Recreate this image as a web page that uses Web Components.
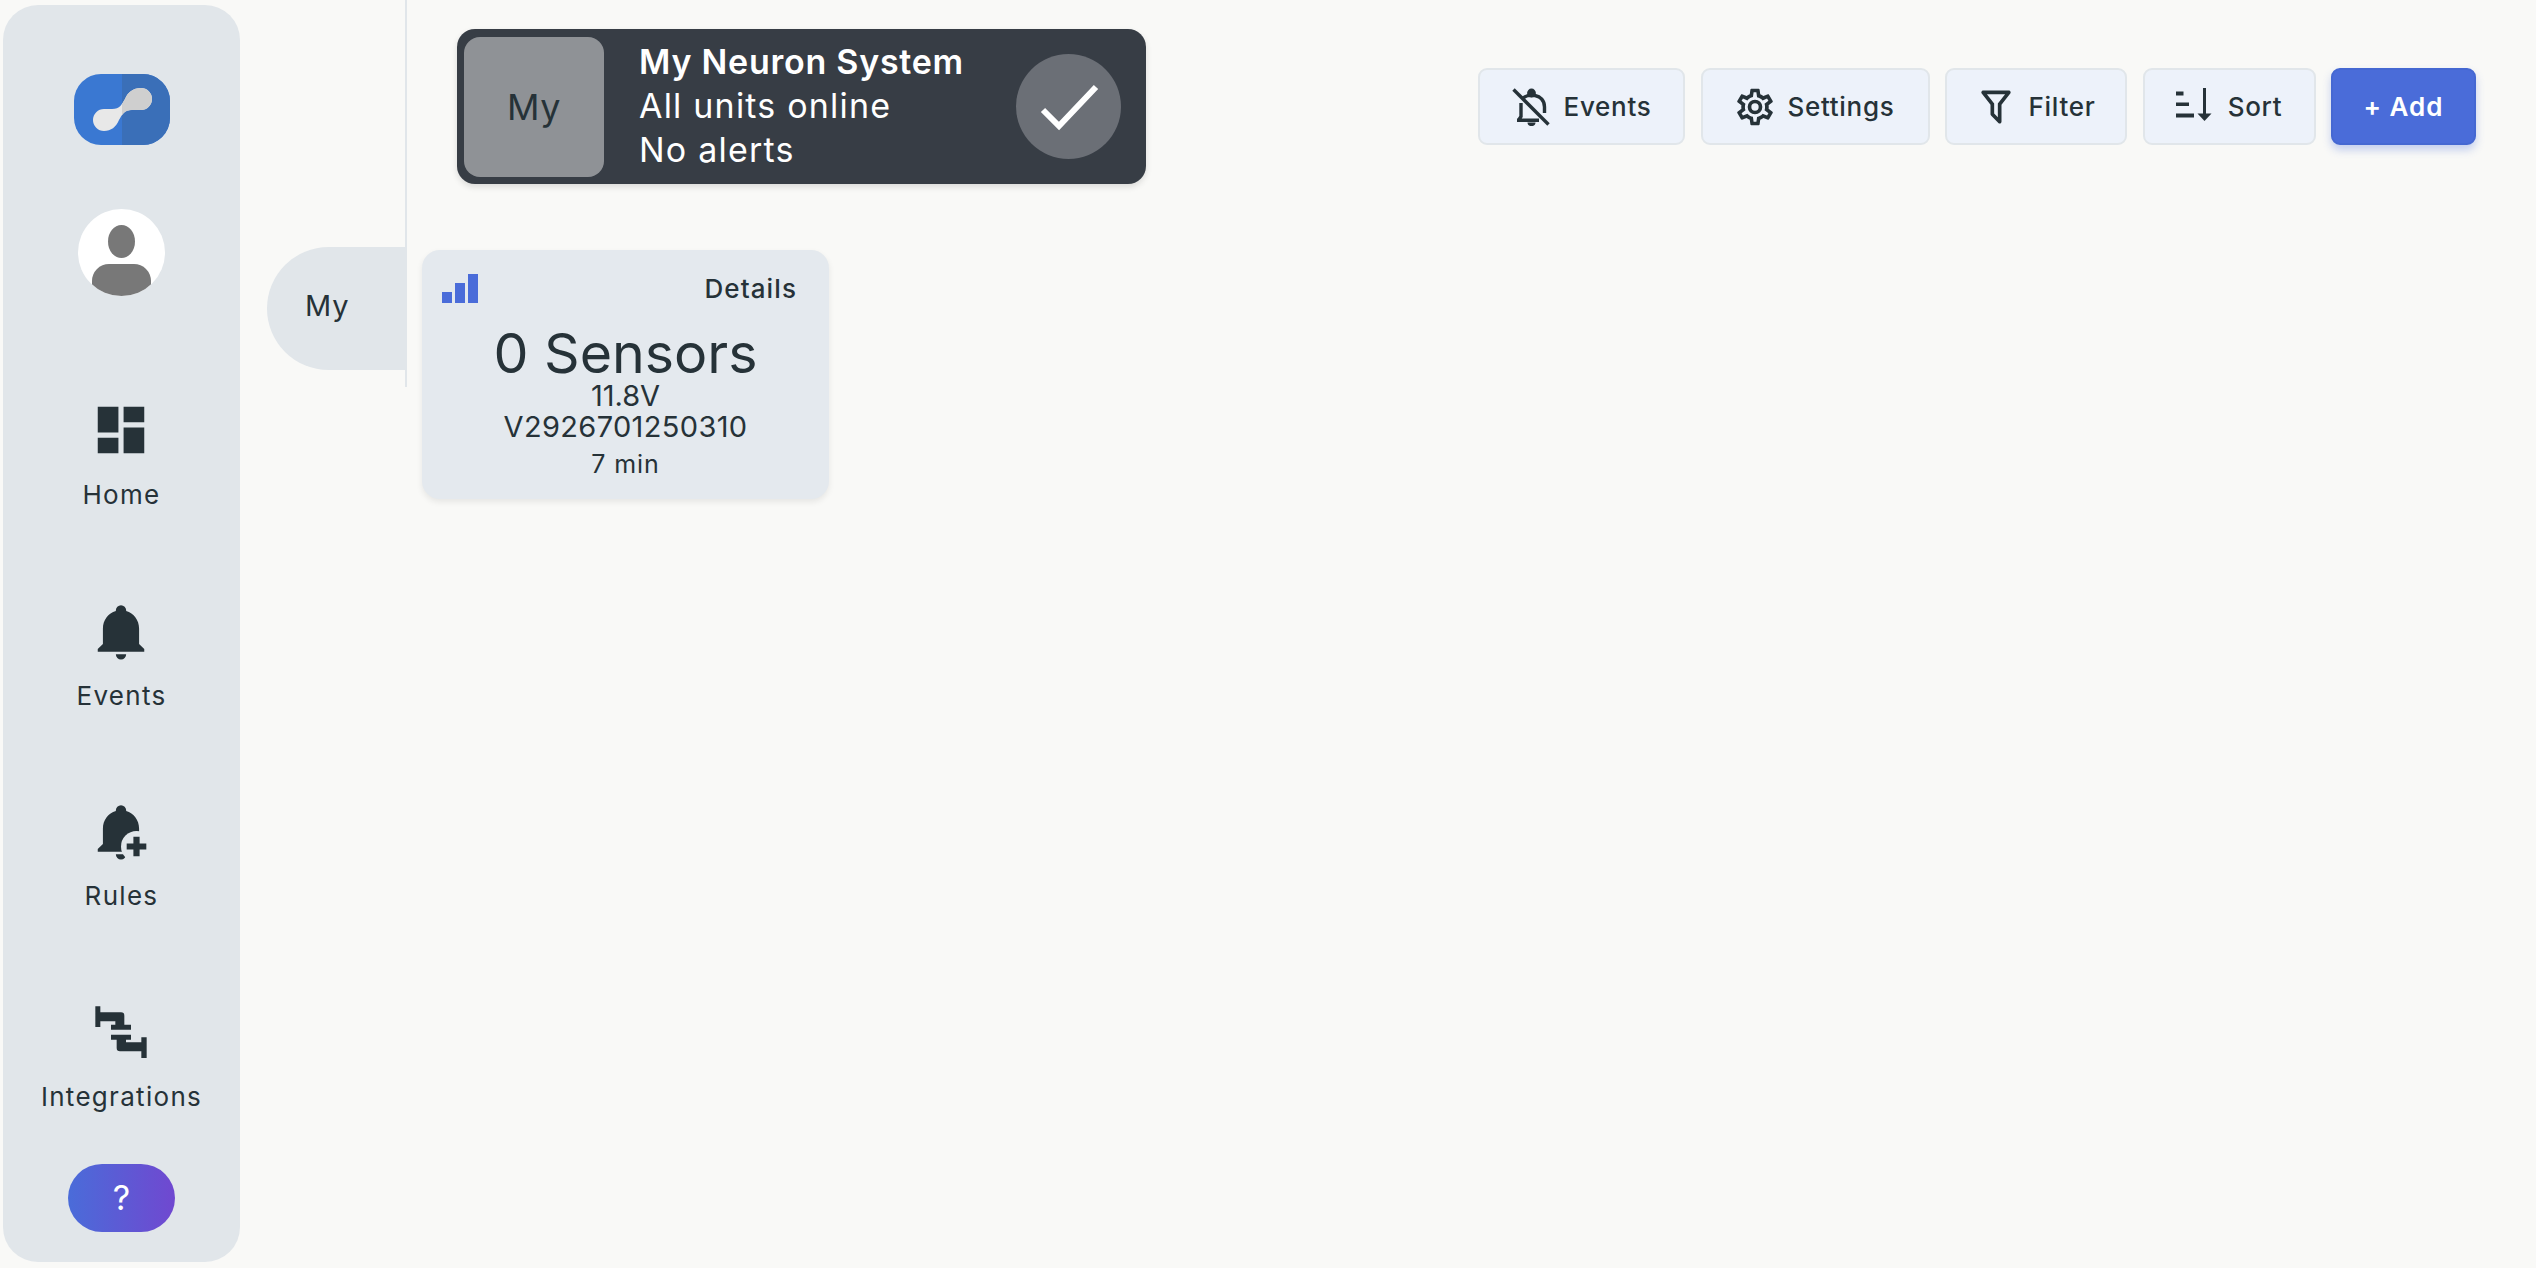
<!DOCTYPE html>
<html lang="en">
<head>
<meta charset="utf-8">
<title>Neuron</title>
<style>
  html, body { margin: 0; height: 100%; background: #f9f9f7; }
  body { font-family: Inter, "Liberation Sans", sans-serif; color: #263238; overflow: hidden; }
</style>
</head>
<body>
<app-shell>
  <side-bar>
    <nav-item>
      <svg slot="icon" viewBox="0 0 24 24"><path d="M3 13h8V3H3v10zm0 8h8v-6H3v6zm10 0h8V11h-8v10zm0-18v6h8V3h-8z"/></svg>
      Home
    </nav-item>
    <nav-item>
      <svg slot="icon" viewBox="0 0 24 24"><path d="M21,19V20H3V19L5,17V11C5,7.9 7.03,5.17 10,4.29C10,4.19 10,4.1 10,4A2,2 0 0,1 12,2A2,2 0 0,1 14,4C14,4.1 14,4.19 14,4.29C16.97,5.17 19,7.9 19,11V17L21,19M14,21A2,2 0 0,1 12,23A2,2 0 0,1 10,21H14Z"/></svg>
      Events
    </nav-item>
    <nav-item>
      <svg slot="icon" viewBox="0 0 24 24">
        <path d="M21,19V20H3V19L5,17V11C5,7.9 7.03,5.17 10,4.29C10,4.19 10,4.1 10,4A2,2 0 0,1 12,2A2,2 0 0,1 14,4C14,4.1 14,4.19 14,4.29C16.97,5.17 19,7.9 19,11V17L21,19M14,21A2,2 0 0,1 12,23A2,2 0 0,1 10,21H14Z"/>
        <circle cx="18" cy="18" r="6" fill="#e1e6ea"/>
        <path d="M16.8 14.2h2.4v2.6h2.6v2.4h-2.6v2.6h-2.4v-2.6h-2.6v-2.4h2.6z"/>
      </svg>
      Rules
    </nav-item>
    <nav-item>
      <svg slot="icon" viewBox="32 34 186 186">
        <path d="M48 50H63V68H125Q135 68 135 78V105H155V120H95V105H108V95H63V112H48Z"/>
        <path d="M95 135H155V150H140V158H186V143H202V205H186V185H122Q112 185 112 175V150H95Z"/>
      </svg>
      Integrations
    </nav-item>
  </side-bar>
  <group-tabs>
    <group-tab>My</group-tab>
  </group-tabs>
  <main-panel>
    <top-bar>
      <status-card tile="My" title-text="My Neuron System">
        <span>All units online</span>
        <span>No alerts</span>
      </status-card>
      <action-button slot="actions" style="--w:207px">
        <svg slot="icon" viewBox="0 0 38 38">
          <path d="M1.5 1.5L36.5 36.5" fill="none" stroke="currentColor" stroke-width="3.4"/>
          <path d="M5 32.2h22M7 31.5l2-3V15M32.5 25V19C32.5 12.5 28.5 8.5 23 7.5H16C14 8.2 12.5 9 11 10" fill="none" stroke="currentColor" stroke-width="3.4"/>
          <circle cx="19.5" cy="5" r="4.4"/>
          <path d="M15.5 34.5h8A4 3.6 0 0 1 15.5 34.5Z"/>
        </svg>
        Events
      </action-button>
      <action-button slot="actions" style="--w:229px">
        <svg slot="icon" class="mdi" viewBox="0 0 24 24"><path d="M12,8A4,4 0 0,1 16,12A4,4 0 0,1 12,16A4,4 0 0,1 8,12A4,4 0 0,1 12,8M12,10A2,2 0 0,0 10,12A2,2 0 0,0 12,14A2,2 0 0,0 14,12A2,2 0 0,0 12,10M10,22C9.75,22 9.54,21.82 9.5,21.58L9.13,18.93C8.5,18.68 7.96,18.34 7.44,17.94L4.95,18.95C4.73,19.03 4.46,18.95 4.34,18.73L2.34,15.27C2.21,15.05 2.27,14.78 2.46,14.63L4.57,12.97L4.5,12L4.57,11L2.46,9.37C2.27,9.22 2.21,8.95 2.34,8.73L4.34,5.27C4.46,5.05 4.73,4.96 4.95,5.05L7.44,6.05C7.96,5.66 8.5,5.32 9.13,5.07L9.5,2.42C9.54,2.18 9.75,2 10,2H14C14.25,2 14.46,2.18 14.5,2.42L14.87,5.07C15.5,5.32 16.04,5.66 16.56,6.05L19.05,5.05C19.27,4.96 19.54,5.05 19.66,5.27L21.66,8.73C21.79,8.95 21.73,9.22 21.54,9.37L19.43,11L19.5,12L19.43,13L21.54,14.63C21.73,14.78 21.79,15.05 21.66,15.27L19.66,18.73C19.54,18.95 19.27,19.04 19.05,18.95L16.56,17.95C16.04,18.34 15.5,18.68 14.87,18.93L14.5,21.58C14.46,21.82 14.25,22 14,22H10M11.25,4L10.88,6.61C9.68,6.86 8.62,7.5 7.85,8.39L5.44,7.35L4.69,8.65L6.8,10.2C6.4,11.37 6.4,12.64 6.8,13.8L4.68,15.36L5.43,16.66L7.86,15.62C8.63,16.5 9.68,17.14 10.87,17.38L11.24,20H12.76L13.13,17.39C14.32,17.14 15.37,16.5 16.14,15.62L18.57,16.66L19.32,15.36L17.2,13.81C17.6,12.64 17.6,11.37 17.2,10.2L19.31,8.65L18.56,7.35L16.15,8.39C15.38,7.5 14.32,6.86 13.12,6.62L12.75,4H11.25Z"/></svg>
        Settings
      </action-button>
      <action-button slot="actions" style="--w:182px">
        <svg slot="icon" class="mdi" viewBox="0 0 24 24"><path d="M15,19.88C15.04,20.18 14.94,20.5 14.71,20.71C14.32,21.1 13.69,21.1 13.3,20.71L9.29,16.7C9.06,16.47 8.96,16.16 9,15.87V10.75L4.21,4.62C3.87,4.19 3.95,3.56 4.38,3.22C4.57,3.08 4.78,3 5,3V3H19V3C19.22,3 19.43,3.08 19.62,3.22C20.05,3.56 20.13,4.19 19.79,4.62L15,10.75V19.88M7.04,5L11,10.06V15.58L13,17.58V10.05L16.96,5H7.04Z"/></svg>
        Filter
      </action-button>
      <action-button slot="actions" style="--w:173px">
        <svg slot="icon" viewBox="0 0 38 38">
          <rect x="0" y="3.5" width="7.5" height="4"/>
          <rect x="0" y="14.5" width="13" height="3.5"/>
          <rect x="0" y="25.5" width="18" height="4"/>
          <rect x="27" y="0" width="3" height="28"/>
          <path d="M21.5 25.5h14L28.5 33Z"/>
        </svg>
        Sort
      </action-button>
      <action-button slot="actions" primary style="--w:145px">+ Add</action-button>
    </top-bar>
    <unit-card voltage="11.8V" serial="V2926701250310" age="7 min">0 Sensors</unit-card>
  </main-panel>
</app-shell>

<script>
function define(tag, html) {
  class C extends HTMLElement {
    constructor() {
      super();
      this.attachShadow({ mode: 'open' });
      this.shadowRoot.innerHTML = typeof html === 'function' ? html(this) : html;
    }
  }
  customElements.define(tag, C);
}

define('app-shell', `
  <style>
    :host { display: flex; align-items: flex-start; height: 1268px; box-sizing: border-box; }
  </style>
  <slot></slot>
`);

define('side-bar', `
  <style>
    :host {
      display: flex; flex-direction: column; align-items: center;
      flex: none; box-sizing: border-box; width: 237px; height: 1257px;
      margin: 5px 0 0 3px; padding-top: 69px;
      background: #e1e6ea; border-radius: 35px;
    }
    .logo { display: block; width: 96px; height: 71px; flex: none; }
    .avatar { display: block; width: 87px; height: 87px; margin-top: 64px; flex: none; }
    .nav { display: flex; flex-direction: column; gap: 84.6px; margin-top: 103px; align-items: center; }
    .help {
      display: flex; align-items: center; justify-content: center;
      width: 107px; height: 68px; margin-top: 47px; flex: none;
      border-radius: 34px; color: #fff; font-size: 34px; font-weight: 400;
      background: linear-gradient(90deg, #4a6cd9, #7048d0);
    }
  </style>
  <svg class="logo" viewBox="0 0 96 71">
    <defs>
      <clipPath id="logo-r"><rect x="48" y="0" width="48" height="71"/></clipPath>
    </defs>
    <rect width="96" height="71" rx="27" fill="#3a78d2"/>
    <rect width="96" height="71" rx="27" fill="#3a6fb8" clip-path="url(#logo-r)"/>
    <path d="M30 35H38C46 35 48 30 51 25C54 18 59 14 67 14A11 11 0 0 1 67 36H58C50 36 48 41 45 46C42 53 37 57 30 57A11 11 0 0 1 30 35Z" fill="#e8e8e8"/>
    <path d="M30 35H38C46 35 48 30 51 25C54 18 59 14 67 14A11 11 0 0 1 67 36H58C50 36 48 41 45 46C42 53 37 57 30 57A11 11 0 0 1 30 35Z" fill="#cfcfcf" clip-path="url(#logo-r)"/>
  </svg>
  <svg class="avatar" viewBox="0 0 87 87">
    <defs><clipPath id="av"><circle cx="43.5" cy="43.5" r="43.5"/></clipPath></defs>
    <circle cx="43.5" cy="43.5" r="43.5" fill="#fff"/>
    <ellipse cx="43.5" cy="32.5" rx="13.5" ry="16.5" fill="#787878"/>
    <g clip-path="url(#av)"><rect x="14" y="55" width="59" height="50" rx="17" fill="#787878"/></g>
  </svg>
  <div class="nav"><slot></slot></div>
  <div class="help">?</div>
`);

define('nav-item', `
  <style>
    :host {
      display: flex; flex-direction: column; align-items: center; gap: 14px;
      height: 116px; font-size: 26px; line-height: 40px; letter-spacing: 1.3px;
      color: #263238; white-space: nowrap;
    }
    ::slotted(svg) { display: block; width: 62px; height: 62px; fill: #263238; }
  </style>
  <slot name="icon"></slot>
  <slot></slot>
`);

define('group-tabs', `
  <style>
    :host {
      display: flex; flex-direction: column; align-items: flex-end;
      flex: none; box-sizing: border-box; width: 167px; height: 387px;
      padding-top: 247px; border-right: 2px solid #e1e6ea;
    }
  </style>
  <slot></slot>
`);

define('group-tab', `
  <style>
    :host {
      display: flex; align-items: center; box-sizing: border-box;
      width: 139px; height: 123px; padding: 0 0 7px 38px;
      background: #e1e6ea; border-radius: 62px 0 0 62px;
      font-size: 29px; margin-right: -1px; letter-spacing: .8px;
    }
  </style>
  <slot></slot>
`);

define('main-panel', `
  <style>
    :host { display: block; flex: 1; min-width: 0; padding: 29px 60px 0 15px; }
  </style>
  <slot></slot>
`);

define('top-bar', `
  <style>
    :host { display: flex; align-items: center; justify-content: space-between; padding-left: 35px; }
    .actions { display: flex; gap: 15.5px; }
  </style>
  <slot></slot>
  <div class="actions"><slot name="actions"></slot></div>
`);

define('status-card', el => `
  <style>
    :host {
      display: flex; align-items: center; box-sizing: border-box;
      width: 689px; height: 155px; padding: 0 25px 0 7px; flex: none;
      background: #373d45; border-radius: 18px; color: #fff;
      box-shadow: 0 3px 6px rgba(0,0,0,.12);
    }
    .tile {
      display: flex; align-items: center; justify-content: center;
      width: 140px; height: 140px; border-radius: 16px; flex: none;
      background: #8f9296; color: #263238; font-size: 36px; letter-spacing: .6px;
    }
    .text {
      flex: 1; display: flex; flex-direction: column; padding: 0 0 2px 35px;
      font-size: 34px; line-height: 44px; letter-spacing: 1.2px;
    }
    .title { font-weight: 600; letter-spacing: .75px; }
    ::slotted(span) { display: block; }
    .ok { display: block; width: 105px; height: 105px; flex: none; }
  </style>
  <div class="tile">${el.getAttribute('tile')}</div>
  <div class="text">
    <div class="title">${el.getAttribute('title-text')}</div>
    <slot></slot>
  </div>
  <svg class="ok" viewBox="0 0 105 105">
    <circle cx="52.5" cy="52.5" r="52.5" fill="#6b6f76"/>
    <path d="M27 56L43 72L80 33" fill="none" stroke="#fff" stroke-width="6"/>
  </svg>
`);

define('action-button', el => `
  <style>
    :host {
      display: flex; align-items: center; justify-content: center; gap: 14px;
      box-sizing: border-box; width: var(--w); height: 77px; flex: none;
      background: #edf2fa; border: 2px solid #e1e6ea; border-radius: 9px;
      color: #263238; font-size: 26px; font-weight: 500; white-space: nowrap; letter-spacing: .7px;
    }
    :host([primary]) {
      background: #4a6cd9; border-color: #4568d2; color: #fff; font-weight: 600; letter-spacing: 1px;
      box-shadow: 0 5px 8px rgba(74,108,217,.3);
    }
    ::slotted(svg) { display: block; width: 38px; height: 38px; fill: currentColor; flex: none; }
    ::slotted(svg.mdi) { width: 44px; height: 44px; margin: 0 -3px; }
  </style>
  <slot name="icon"></slot>
  <slot></slot>
`);

define('unit-card', el => `
  <style>
    :host {
      display: flex; flex-direction: column; align-items: stretch; box-sizing: border-box;
      width: 407px; height: 249px; margin-top: 66px; padding: 20px 32px 0 20px;
      background: #e4e9ee; border-radius: 18px; text-align: center;
      box-shadow: 0 3px 6px rgba(0,0,0,.08);
    }
    .head { display: flex; align-items: center; justify-content: space-between; height: 36px; }
    .details { font-size: 26px; font-weight: 500; letter-spacing: 1.1px; }
    .bars { display: block; width: 36px; height: 29px; fill: #4a6cd9; }
    .count { font-size: 55.5px; line-height: 54px; margin: 20px -12px 0 0; }
    .meta { font-size: 29px; line-height: 31px; margin: 0 -12px 0 0; }
    .serial { letter-spacing: .35px; }
    .age { font-size: 25px; line-height: 32px; margin: 6px -12px 0 0; letter-spacing: .9px; }
  </style>
  <div class="head">
    <svg class="bars" viewBox="0 0 36 29">
      <rect x="0" y="18" width="10" height="11"/>
      <rect x="13" y="9" width="10" height="20"/>
      <rect x="26" y="0" width="10" height="29"/>
    </svg>
    <span class="details">Details</span>
  </div>
  <div class="count"><slot></slot></div>
  <div class="meta">${el.getAttribute('voltage')}</div>
  <div class="meta serial">${el.getAttribute('serial')}</div>
  <div class="age">${el.getAttribute('age')}</div>
`);
</script>
</body>
</html>
